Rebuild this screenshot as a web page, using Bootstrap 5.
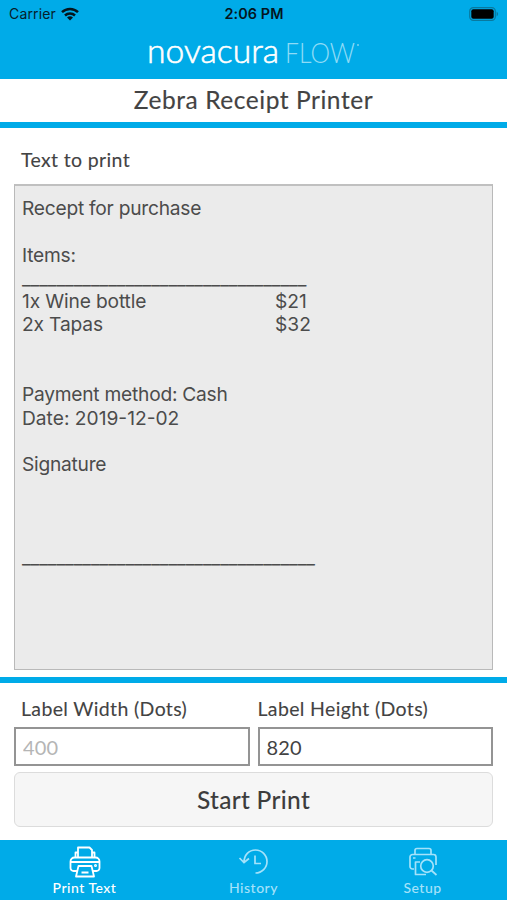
<!DOCTYPE html>
<html lang="en">
<head>
<meta charset="utf-8">
<meta name="viewport" content="width=device-width, initial-scale=1">
<title>Zebra Receipt Printer</title>
<link href="https://cdn.jsdelivr.net/npm/bootstrap@5.3.0/dist/css/bootstrap.min.css" rel="stylesheet">
<style>
:root { --flow-blue: #00abe8; }
body { font-family: Lato, sans-serif; color: #434343; }
.app { height: 900px; }
.bg-flow { background: var(--flow-blue); }
.status-bar { height: 28px; font: 400 14px/28px Inter, sans-serif; color: #06202b; padding: 0 8px 0 9px; }
.status-bar .carrier { letter-spacing: .15px; }
.status-bar .clock { font-size: 14.4px; font-weight: 600; color: #04161e; letter-spacing: .1px; }
.brand { height: 51px; }
.brand svg { display: block; overflow: visible; }
.page-title { height: 43px; line-height: 42px; font-size: 24.5px; font-weight: 400; letter-spacing: .55px; -webkit-text-stroke: .15px; }
.rule { height: 6px; }
.print-area { padding: 19px 14px 7px; height: 549px; }
.section-label { font-size: 19.5px; font-weight: 400; line-height: 25px; letter-spacing: .35px; padding-left: 7px; -webkit-text-stroke: .1px; }
.print-area .section-label { height: 37px; }
.receipt { height: 486px; background: #ebebeb; border: 1px solid #b9b9b9; border-top: 2px solid #c0c0c0; padding: 11px 7px; font: 400 19.2px/23.3px Inter, sans-serif; letter-spacing: -.25px; color: #4c4c4c; }
.receipt .line { height: 23.3px; white-space: pre; }
.receipt .item-name { width: 253px; letter-spacing: -.15px; }
.receipt .price { letter-spacing: 0; }
.receipt .date { letter-spacing: 0; }
.receipt .underscores { font-size: 19px; letter-spacing: -.05px; }
.settings { padding: 13px 14px 0; }
.fields { --bs-gutter-x: 8px; }
.fields .section-label { height: 31px; }
.fields .second { padding-left: 0; }
.field { height: 39px; border: 2px solid #949494; border-radius: 0; padding: 1px 7px 0; font-family: inherit; font-size: 20px; letter-spacing: .2px; color: #434343; }
.field::placeholder { color: #b5b5b5; opacity: 1; }
.start { height: 55px; margin-top: 6px; background: #f6f6f6; border: 1px solid #dcdcdc; border-radius: 6px; font-size: 24.5px; font-weight: 500; letter-spacing: .3px; color: #3d3d3d; padding: 1px 0 0; }
.tabs { height: 60px; }
.tabs a { color: #a4e2fa; font-size: 14px; font-weight: 500; line-height: 16px; letter-spacing: .5px; padding-top: 6px; }
.tabs a.current { color: #fff; }
.tabs svg { display: block; margin-bottom: 2px; }
</style>
</head>
<body>
<div class="app d-flex flex-column bg-white overflow-hidden">
  <header class="bg-flow">
    <div class="status-bar row g-0">
      <div class="col d-flex align-items-center"><span class="carrier">Carrier</span>
        <svg width="20" height="14" viewBox="0 0 20 14" fill="none" stroke="#04161e" stroke-width="2.5" class="ms-1"><path d="M2 5.2a11.6 11.6 0 0 1 16 0M5 8.5a7.2 7.2 0 0 1 10 0"/><path d="M10 13.5 7 10.6a4.3 4.3 0 0 1 6 0z" fill="#04161e" stroke="none"/></svg>
      </div>
      <div class="col-auto clock">2:06 PM</div>
      <div class="col d-flex align-items-center justify-content-end">
        <svg width="30" height="14" viewBox="0 0 30 14"><rect x=".7" y=".7" width="25.6" height="12.6" rx="3.6" fill="none" stroke="#08799f" stroke-width="1.2"/><rect x="2.3" y="2.3" width="22.4" height="9.4" rx="2" fill="#000"/><path d="M27.6 4.5q3 2.5 0 5z" fill="#08799f"/></svg>
      </div>
    </div>
    <div class="brand d-flex justify-content-center">
      <svg width="214" height="51" viewBox="0 0 214 51" aria-label="novacura FLOW"><text x="0" y="35" font-family="Lato, sans-serif" font-weight="300" font-size="34" fill="#fff" stroke="#fff" stroke-width=".6" textLength="132" lengthAdjust="spacingAndGlyphs">novacura</text><text x="138" y="35" font-family="Lato, sans-serif" font-weight="300" font-size="27" fill="#8fdbf6" textLength="70" lengthAdjust="spacingAndGlyphs">FLOW</text><circle cx="211" cy="17" r="1" fill="#7dd3f3"/></svg>
    </div>
  </header>
  <h1 class="page-title text-center m-0">Zebra Receipt Printer</h1>
  <div class="rule bg-flow"></div>
  <main class="d-flex flex-column flex-grow-1">
    <section class="print-area">
      <div class="section-label">Text to print</div>
      <div class="receipt">
        <div class="line">Recept for purchase</div>
        <div class="line"></div>
        <div class="line">Items:</div>
        <div class="line underscores">_________________________________</div>
        <div class="line d-flex"><span class="item-name">1x Wine bottle</span><span class="price">$21</span></div>
        <div class="line d-flex"><span class="item-name">2x Tapas</span><span class="price">$32</span></div>
        <div class="line"></div>
        <div class="line"></div>
        <div class="line">Payment method: Cash</div>
        <div class="line date">Date: 2019-12-02</div>
        <div class="line"></div>
        <div class="line">Signature</div>
        <div class="line"></div>
        <div class="line"></div>
        <div class="line"></div>
        <div class="line underscores">__________________________________</div>
      </div>
    </section>
    <div class="rule bg-flow"></div>
    <section class="settings">
      <div class="row fields">
        <div class="col"><label class="section-label d-block" for="w">Label Width (Dots)</label><input id="w" class="field w-100 d-block" placeholder="400"></div>
        <div class="col"><label class="section-label second d-block" for="h">Label Height (Dots)</label><input id="h" class="field w-100 d-block" value="820"></div>
      </div>
      <button class="btn start w-100 d-block" type="button">Start Print</button>
    </section>
  </main>
  <nav class="tabs bg-flow row g-0">
    <a class="col d-flex flex-column align-items-center text-decoration-none current" href="#">
      <svg width="32" height="32" viewBox="0 0 32 32" fill="none" stroke="currentColor" stroke-width="1.8" stroke-linejoin="round"><path d="M9 11.500V1.500h11.500l2.500 2.500v7.500zM8.500 6.500h-2v5.500M23.500 6.500h2v5.500M7.500 25H4.500a3 3 0 0 1-3-3v-6.500a4 4 0 0 1 4-4h21a4 4 0 0 1 4 4V22a3 3 0 0 1-3 3h-3M2 16h28M9.500 20h13l2.500 10.500H7zM12.500 26.500h7"/><circle cx="26.500" cy="19.500" r=".6"/></svg>
      <span>Print Text</span></a>
    <a class="col d-flex flex-column align-items-center text-decoration-none" href="#">
      <svg width="32" height="32" viewBox="0 0 32 32" fill="none" stroke="currentColor" stroke-width="1.7"><path d="M6 16.500C6 9 11 4 17.500 4a11.500 11.500 0 0 1 0 23M1.500 12 6 16.500l5-4M17 9.500v8h6"/></svg>
      <span>History</span></a>
    <a class="col d-flex flex-column align-items-center text-decoration-none" href="#">
      <svg width="32" height="32" viewBox="0 0 32 32" fill="none" stroke="currentColor" stroke-width="1.7" stroke-linejoin="round"><path d="M8 8.500V4.500a2 2 0 0 1 2-2h12a2 2 0 0 1 2 2v4M7 23H5.500A2.500 2.500 0 0 1 3 20.500V11a2.500 2.500 0 0 1 2.500-2.500h21A2.500 2.500 0 0 1 29 11v8M13 16H8.500v12.500H19M6 12h2.500M24.500 24.500l5 4.500"/><circle cx="20" cy="20" r="6.300"/></svg>
      <span>Setup</span></a>
  </nav>
</div>
<script src="https://cdn.jsdelivr.net/npm/bootstrap@5.3.0/dist/js/bootstrap.bundle.min.js"></script>
</body>
</html>
